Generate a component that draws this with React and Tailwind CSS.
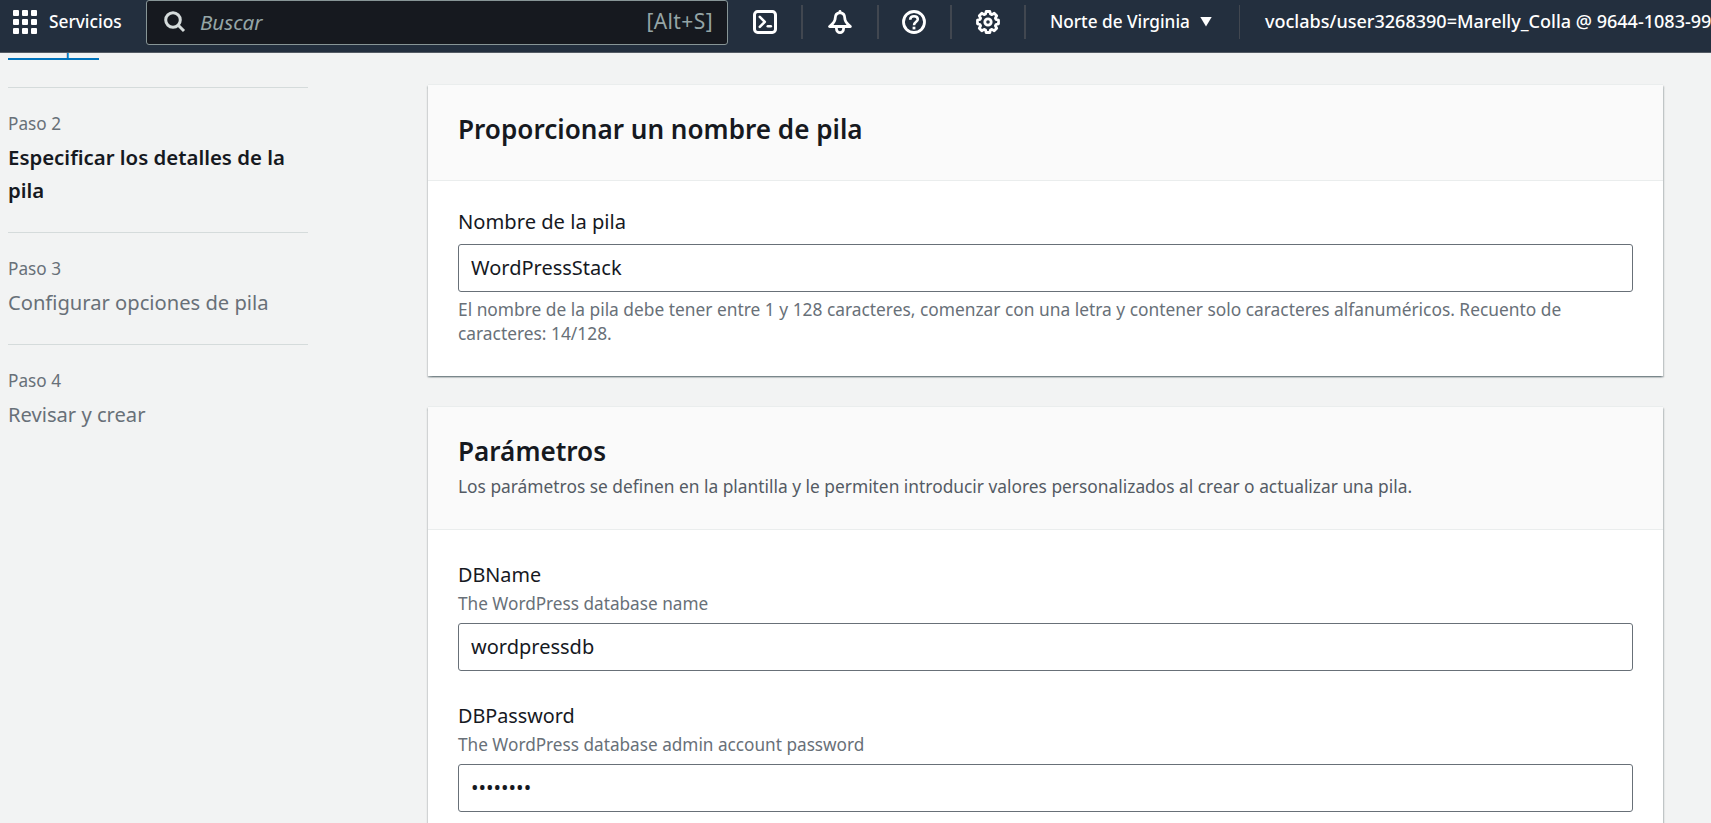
function GridIcon() {
  return (
    <svg className="h-6 w-6 shrink-0" viewBox="0 0 24 24" fill="#fff">
      {[0, 9, 18].map((y) =>
        [0, 9, 18].map((x) => <rect key={`${x}-${y}`} x={x} y={y} width="6" height="6" rx="1" />)
      )}
    </svg>
  );
}

function SearchIcon() {
  return (
    <svg className="h-[22px] w-[22px] shrink-0" viewBox="0 0 22 22" fill="none" stroke="#d5dbdb" strokeWidth="3">
      <circle cx="9" cy="9" r="7.3" />
      <path d="M14 14l6 6" />
    </svg>
  );
}

function TerminalIcon() {
  return (
    <svg className="h-6 w-6" viewBox="0 0 24 24" fill="none" stroke="#fff" strokeWidth="3" strokeLinejoin="round">
      <rect x="1.5" y="1.5" width="21" height="21" rx="3.2" />
      <path d="M6.8 6.8l5 5-5 5" strokeWidth="2.6" strokeLinecap="round" />
      <path d="M14.8 16.3h3" strokeWidth="2.6" strokeLinecap="round" />
    </svg>
  );
}

function BellIcon() {
  return (
    <svg className="h-6 w-6" viewBox="0 0 24 24" fill="none" stroke="#fff" strokeWidth="2.8" strokeLinejoin="round" strokeLinecap="round">
      <path d="M12 2.6C8.6 3 7.2 5.6 7.2 8.2c0 4-2.8 5.800-5.600 8.300h20.800c-2.800-2.500-5.600-4.300-5.600-8.300 0-2.600-1.400-5.200-4.800-5.600z" />
      <path d="M12 2V1.400" />
      <path d="M8.400 18.200c0 5.800 7.200 5.800 7.200 0" />
    </svg>
  );
}

function HelpIcon() {
  return (
    <svg className="h-6 w-6" viewBox="0 0 24 24" fill="none" stroke="#fff" strokeWidth="2.8">
      <circle cx="12" cy="12" r="10.5" />
      <path d="M8.200 9.700c0-2.300 1.600-3.500 3.800-3.500s3.800 1.200 3.800 3.100c0 2.500-3.800 2.600-3.800 6" strokeWidth="2.6" />
      <path d="M12 16.700v2.700" strokeWidth="2.8" />
    </svg>
  );
}

function GearIcon() {
  return (
    <svg className="h-6 w-6" viewBox="0 0 24 24" fill="none" stroke="#fff" strokeLinejoin="round">
      <path
        strokeWidth="2.8"
        d="M10.200 1.500h3.600l.7 2.500 1.400.6 2.300-1.300 2.500 2.500-1.300 2.300.6 1.400 2.500.7v3.600l-2.500.7-.6 1.400 1.300 2.300-2.500 2.500-2.300-1.300-1.400.6-.7 2.500h-3.600l-.7-2.500-1.400-.6-2.300 1.300-2.500-2.500 1.300-2.300-.6-1.400-2.500-.7v-3.600l2.500-.7.6-1.400-1.300-2.300 2.500-2.500 2.300 1.300 1.400-.6z"
      />
      <circle cx="12" cy="12" r="3.2" strokeWidth="2.8" />
    </svg>
  );
}

function Header() {
  return (
    <header className="relative z-10 h-[53px] shrink-0 overflow-hidden border-b border-[#545b64] bg-[#232f3e] text-white">
      <div className="flex h-11 items-center whitespace-nowrap font-medium">
        <div className="flex w-[146px] shrink-0 items-center gap-3 pl-[13px]">
          <GridIcon />
          <span className="text-[17.3px]">Servicios</span>
        </div>
        <div className="flex h-[45px] w-[582px] shrink-0 items-center rounded-[3px] border border-[#879596] bg-[#16191f] pl-[17px] pr-[14px] font-normal text-[#95a5a6]">
          <SearchIcon />
          <span className="ml-[14px] text-[20.6px] italic">Buscar</span>
          <span className="ml-auto text-[21px] tracking-[0.4px]">[Alt+S]</span>
        </div>
        <div className="flex h-[34px] w-[75px] shrink-0 items-center justify-center border-r-2 border-[#414750] pl-px"><TerminalIcon /></div>
        <div className="flex h-[34px] w-[76px] shrink-0 items-center justify-center border-r-2 border-[#414750]"><BellIcon /></div>
        <div className="flex h-[34px] w-[73px] shrink-0 items-center justify-center border-r-2 border-[#414750] pr-px"><HelpIcon /></div>
        <div className="flex h-[34px] w-[74px] shrink-0 items-center justify-center border-r-2 border-[#414750]"><GearIcon /></div>
        <div className="flex h-[34px] w-[214px] shrink-0 items-center border-r border-[#414750] pl-[24px]">
          <span className="w-[150px] text-[17.2px]">Norte de Virginia</span>
          <svg className="h-[10px] w-3" viewBox="0 0 12 10" fill="#fff"><path d="M0.300 0h11.400L6 9.600z" /></svg>
        </div>
        <span className="pl-[25px] text-[18.05px]">voclabs/user3268390=Marelly_Colla @ 9644-1083-99</span>
      </div>
    </header>
  );
}

function Step({ number, title, active, last }) {
  return (
    <li className={last ? "pt-[22px]" : "border-b border-[#d5dbdb] pt-[22px] pb-[25px]"}>
      <div className="text-[17.2px] leading-[27px] text-[#687078]">Paso {number}</div>
      <div className={active ? "mt-1 text-[20.4px] font-semibold leading-[33px] text-[#16191f]" : "mt-1 text-[20.15px] leading-[33px] text-[#687078]"}>
        {title}
      </div>
    </li>
  );
}

function Card({ title, description, bodyClass, children }) {
  return (
    <section className="border-t border-[#eaeded] bg-white shadow-[0_1.5px_1.5px_0_rgba(0,28,36,0.3),1.5px_1.5px_1.5px_0_rgba(0,28,36,0.15),-1.5px_1.5px_1.5px_0_rgba(0,28,36,0.15)]">
      <div className={description ? "border-b border-[#eaeded] bg-[#fafafa] px-[30px] pt-[27px] pb-[31px]" : "border-b border-[#eaeded] bg-[#fafafa] px-[30px] pt-[27px] pb-[34px]"}>
        <h2 className="text-[26.1px] font-semibold leading-[34px] text-[#16191f]">{title}</h2>
        {description && <p className="mt-[6px] text-[17.35px] leading-6 text-[#545b64]">{description}</p>}
      </div>
      <div className={bodyClass}>{children}</div>
    </section>
  );
}

const inputClass =
  "block h-12 w-full rounded-[3px] border border-[#687078] bg-white pl-[12px] pb-[2px] text-[20px] text-[#16191f] outline-none";

function Parameter({ name, hint, type, value }) {
  return (
    <div>
      <div className="text-[19.8px] leading-[30px] text-[#16191f]">{name}</div>
      <div className="mt-[2px] mb-[7px] text-[17.2px] leading-6 text-[#687078]">{hint}</div>
      <input className={inputClass} type={type} defaultValue={value} />
    </div>
  );
}

export default function App() {
  return (
    <div className="flex h-[823px] flex-col overflow-hidden bg-[#f2f3f3] font-['Noto_Sans',sans-serif]">
      <Header />
      <div className="flex min-h-0 flex-1 items-start overflow-hidden">
        <aside className="ml-2 -mt-6 w-[300px] shrink-0">
          <ol>
            <li className="flex border-b border-[#d5dbdb] pb-[27px]">
              <a className="h-[31px] border-b-2 border-[#0073bb] text-[20.2px] leading-[33px] text-[#0073bb]">Crear pila</a>
            </li>
            <Step number={2} title="Especificar los detalles de la pila" active />
            <Step number={3} title="Configurar opciones de pila" />
            <Step number={4} title="Revisar y crear" last />
          </ol>
        </aside>
        <main className="ml-[120px] flex w-[1235px] shrink-0 flex-col gap-[30px] pt-[31px]">
          <Card title="Proporcionar un nombre de pila" bodyClass="px-[30px] pt-[25px] pb-[31px]">
            <div className="mb-[8px] text-[20.15px] leading-[30px] text-[#16191f]">Nombre de la pila</div>
            <input className={inputClass} type="text" defaultValue="WordPressStack" />
            <p className="mt-[5px] text-[17.35px] leading-6 text-[#687078]">
              El nombre de la pila debe tener entre 1 y 128 caracteres, comenzar con una letra y contener solo caracteres
              alfanuméricos. Recuento de caracteres: 14/128.
            </p>
          </Card>
          <Card
            title="Parámetros"
            description="Los parámetros se definen en la plantilla y le permiten introducir valores personalizados al crear o actualizar una pila."
            bodyClass="flex flex-col gap-[30px] px-[30px] pt-[30px] pb-[60px]"
          >
            <Parameter name="DBName" hint="The WordPress database name" type="text" value="wordpressdb" />
            <Parameter name="DBPassword" hint="The WordPress database admin account password" type="password" value="wordpres" />
          </Card>
        </main>
      </div>
    </div>
  );
}
